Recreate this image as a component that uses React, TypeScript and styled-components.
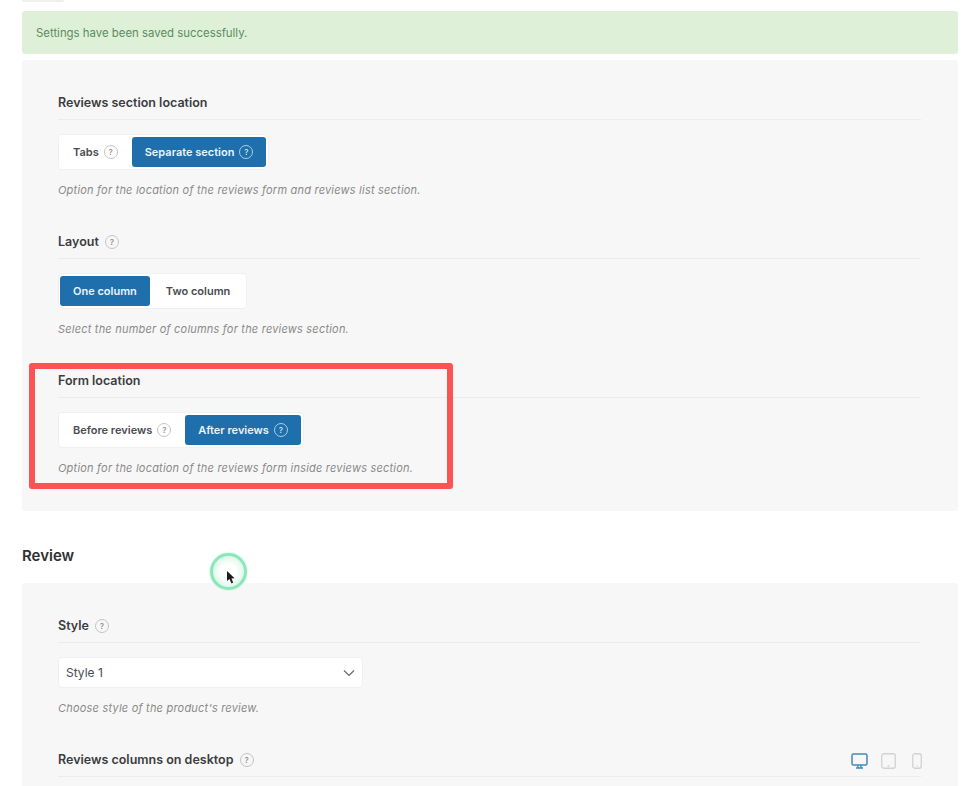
import React from "react";
import styled, { createGlobalStyle } from "styled-components";

const GlobalStyle = createGlobalStyle`
  html, body {
    margin: 0;
    padding: 0;
    background: #ffffff;
    font-family: Inter, "Liberation Sans", sans-serif;
  }
`;

const Page = styled.div`
  position: relative;
  width: 963px;
  height: 786px;
  overflow: hidden;
  padding: 0 5px 0 22px;
  box-sizing: border-box;
`;

const TopNub = styled.div`
  width: 42px;
  height: 2px;
  background: #efefef;
  border-radius: 0 0 4px 4px;
`;

const Notice = styled.div`
  margin-top: 9px;
  height: 43px;
  display: flex;
  align-items: center;
  padding: 0 14px;
  background: #dff0d9;
  border-radius: 3px;
  color: #5b8c5f;
  font-size: 11.4px;
`;

const Panel = styled.div<{ $top: number; $height: number }>`
  margin-top: ${(p) => p.$top}px;
  height: ${(p) => p.$height}px;
  padding: 32px 37px 0 36px;
  background: #f7f7f7;
  border-radius: 3px;
  box-sizing: border-box;
`;

const Section = styled.section`
  margin-bottom: 32px;
`;

const SectionHead = styled.div`
  display: flex;
  align-items: center;
  justify-content: space-between;
  height: 20px;
  padding-bottom: 7px;
  border-bottom: 1px solid #ececec;
  margin-bottom: 14px;
`;

const Label = styled.div`
  display: flex;
  align-items: center;
  gap: 6px;
  padding-top: 2px;
  font-size: 12.5px;
  line-height: 20px;
  font-weight: 600;
  color: #3b3d40;
`;

const Help = styled.span<{ $light?: boolean }>`
  display: inline-flex;
  align-items: center;
  justify-content: center;
  width: 12px;
  height: 12px;
  border: 1px solid ${(p) => (p.$light ? "#a9cde6" : "#c4c4c4")};
  border-radius: 50%;
  font-size: 8px;
  font-weight: 500;
  line-height: 1;
  color: ${(p) => (p.$light ? "#cfe4f3" : "#8c8c8c")};
`;

const Toggle = styled.div`
  display: inline-flex;
  height: 36px;
  padding: 2px 2px 2px 1px;
  background: #ffffff;
  border: 1px solid #f0f0f0;
  border-radius: 4px;
  box-sizing: border-box;
  vertical-align: top;
`;

const Option = styled.div<{ $active?: boolean; $wide?: boolean }>`
  display: flex;
  align-items: center;
  gap: 5px;
  padding: 0 ${(p) => (p.$active ? 13 : 14)}px 0 ${(p) => (p.$wide ? 16 : 13)}px;
  border-radius: 3px;
  font-size: 11px;
  font-weight: 600;
  background: ${(p) => (p.$active ? "#1f6fad" : "transparent")};
  color: ${(p) => (p.$active ? "#eaf4fb" : "#4a4c4f")};
`;

const HelpText = styled.p`
  margin: 11px 0 0;
  font-size: 11px;
  line-height: 18px;
  font-style: italic;
  letter-spacing: 0.21px;
  color: #8a8a8a;
`;

const Title = styled.h2`
  margin: 35px 0 0;
  height: 20px;
  font-size: 15px;
  line-height: 20px;
  font-weight: 600;
  color: #2f3133;
`;

const SelectBox = styled.div`
  width: 305px;
  height: 31px;
  display: flex;
  align-items: center;
  justify-content: space-between;
  padding: 0 6px 0 7px;
  background: #ffffff;
  border: 1px solid #f0f0f0;
  border-radius: 4px;
  box-sizing: border-box;
  font-size: 12px;
  color: #4a4c4f;
`;

const Devices = styled.div`
  display: flex;
  align-items: center;
  gap: 13px;
  margin: 4px -1px 0 0;
`;

const PhoneIcon = styled.svg`
  margin-left: 3px;
`;

const Highlight = styled.div`
  position: absolute;
  left: 29px;
  top: 363px;
  width: 424px;
  height: 126px;
  border: 6px solid #fb5254;
  border-radius: 3px;
  box-sizing: border-box;
`;

const CursorRing = styled.div`
  position: absolute;
  left: 210px;
  top: 553px;
  width: 37px;
  height: 37px;
  border-radius: 50%;
  box-sizing: border-box;
  border: 3px solid #8ae8b8;
  background: radial-gradient(circle, #ffffff 35%, #c2f2d9 100%);
  box-shadow: 0 0 2px #a5eec8;
`;

const CursorArrow = styled.svg`
  position: absolute;
  left: 226px;
  top: 570px;
`;

const Row: React.FC<{
  label: string;
  help?: boolean;
  text: string;
  options: { label: string; active?: boolean; help?: boolean; wide?: boolean }[];
}> = ({ label, help, text, options }) => (
  <Section>
    <SectionHead>
      <Label>
        {label}
        {help && <Help>?</Help>}
      </Label>
    </SectionHead>
    <Toggle>
      {options.map((o) => (
        <Option key={o.label} $active={o.active} $wide={o.wide}>
          {o.label}
          {o.help && <Help $light={o.active}>?</Help>}
        </Option>
      ))}
    </Toggle>
    <HelpText>{text}</HelpText>
  </Section>
);

const App: React.FC = () => {
  return (
    <Page>
      <GlobalStyle />
      <TopNub />
      <Notice>Settings have been saved successfully.</Notice>
      <Panel $top={6} $height={451}>
        <Row
          label="Reviews section location"
          text="Option for the location of the reviews form and reviews list section."
          options={[
            { label: "Tabs", help: true },
            { label: "Separate section", active: true, help: true },
          ]}
        />
        <Row
          label="Layout"
          help
          text="Select the number of columns for the reviews section."
          options={[
            { label: "One column", active: true },
            { label: "Two column", wide: true },
          ]}
        />
        <Row
          label="Form location"
          text="Option for the location of the reviews form inside reviews section."
          options={[
            { label: "Before reviews", help: true },
            { label: "After reviews", active: true, help: true },
          ]}
        />
      </Panel>
      <Title>Review</Title>
      <Panel $top={17} $height={210}>
        <Section>
          <SectionHead>
            <Label>
              Style
              <Help>?</Help>
            </Label>
          </SectionHead>
          <SelectBox>
            Style 1
            <svg width="14" height="14" viewBox="0 0 14 14" fill="none">
              <path d="M2 4.5 L7 9.5 L12 4.5" stroke="#666" strokeWidth="1.2" />
            </svg>
          </SelectBox>
          <HelpText>Choose style of the product's review.</HelpText>
        </Section>
        <Section>
          <SectionHead>
            <Label>
              Reviews columns on desktop
              <Help>?</Help>
            </Label>
            <Devices>
              <svg width="17" height="16" viewBox="0 0 17 16" fill="none">
                <rect x="1" y="1" width="15" height="11" rx="1.5" stroke="#3f8dbd" strokeWidth="1.5" />
                <path d="M5 15 H12 M7 12 V15 M10 12 V15" stroke="#3f8dbd" strokeWidth="1.4" />
              </svg>
              <svg width="15" height="16" viewBox="0 0 15 16" fill="none">
                <rect x="0.75" y="0.75" width="13.5" height="14.5" rx="2" stroke="#d2d2d2" strokeWidth="1.3" />
                <path d="M6.5 13 H8.5" stroke="#c4c4c4" />
              </svg>
              <PhoneIcon width="10" height="16" viewBox="0 0 10 16" fill="none">
                <rect x="0.75" y="0.75" width="8.5" height="14.5" rx="2" stroke="#d2d2d2" strokeWidth="1.3" />
                <path d="M4.5 13 H5.5" stroke="#c4c4c4" />
              </PhoneIcon>
            </Devices>
          </SectionHead>
        </Section>
      </Panel>
      <Highlight />
      <CursorRing />
      <CursorArrow width="10" height="15" viewBox="0 0 10 15">
        <path d="M1 1 L1 11 L3.5 9 L5.5 13.5 L7.2 12.6 L5.4 8.4 L8.6 8.2 Z" fill="#1c1c1c" />
      </CursorArrow>
    </Page>
  );
};

export default App;
